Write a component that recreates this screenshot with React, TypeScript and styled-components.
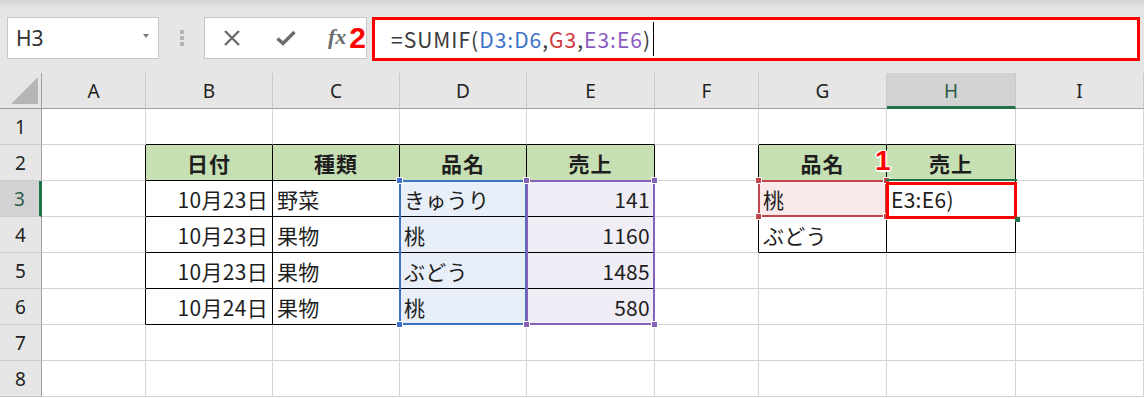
import React from 'react';
import styled, { createGlobalStyle } from 'styled-components';

const GlobalStyle = createGlobalStyle`
  html, body {
    margin: 0;
    padding: 0;
    background: #ffffff;
  }
  body {
    font-family: "Noto Sans CJK JP", "Noto Sans", sans-serif;
    color: #222;
  }
`;

const COLUMNS = ['A', 'B', 'C', 'D', 'E', 'F', 'G', 'H', 'I'];
const ROW_COUNT = 8;

const GREEN_HEAD = '#c6e0b4';
const BLUE_FILL = '#e9eff9';
const PURPLE_FILL = '#f0edf7';
const PINK_FILL = '#f9e9e9';

type Align = 'left' | 'center' | 'right';

interface CellData {
  text: string;
  align?: Align;
  bold?: boolean;
  bg?: string;
}

const head = (text: string): CellData => ({ text, align: 'center', bold: true, bg: GREEN_HEAD });

const DATA: Record<string, CellData> = {
  B2: head('日付'),
  C2: head('種類'),
  D2: head('品名'),
  E2: head('売上'),
  B3: { text: '10月23日', align: 'right' },
  B4: { text: '10月23日', align: 'right' },
  B5: { text: '10月23日', align: 'right' },
  B6: { text: '10月24日', align: 'right' },
  C3: { text: '野菜' },
  C4: { text: '果物' },
  C5: { text: '果物' },
  C6: { text: '果物' },
  D3: { text: 'きゅうり', bg: BLUE_FILL },
  D4: { text: '桃', bg: BLUE_FILL },
  D5: { text: 'ぶどう', bg: BLUE_FILL },
  D6: { text: '桃', bg: BLUE_FILL },
  E3: { text: '141', align: 'right', bg: PURPLE_FILL },
  E4: { text: '1160', align: 'right', bg: PURPLE_FILL },
  E5: { text: '1485', align: 'right', bg: PURPLE_FILL },
  E6: { text: '580', align: 'right', bg: PURPLE_FILL },
  G2: head('品名'),
  H2: head('売上'),
  G3: { text: '桃', bg: PINK_FILL },
  H3: { text: 'E3:E6)' },
  G4: { text: 'ぶどう' },
};

// bordered tables, as [firstCol, firstRow, lastCol, lastRow] (1-based sheet coords)
const TABLES: [number, number, number, number][] = [
  [2, 2, 5, 6],
  [7, 2, 8, 4],
];

const edgesFor = (col: number, row: number) => {
  let right = false;
  let bottom = false;
  TABLES.forEach(([c1, r1, c2, r2]) => {
    const inRows = row >= r1 && row <= r2;
    const inCols = col >= c1 && col <= c2;
    if (inRows && col >= c1 - 1 && col <= c2) right = true;
    if (inCols && row >= r1 - 1 && row <= r2) bottom = true;
  });
  return { right, bottom };
};

/* ---------- formula bar ---------- */

const Page = styled.div`
  width: 1144px;
  height: 398px;
  display: flex;
  flex-direction: column;
  overflow: hidden;
`;

const FormulaArea = styled.div`
  height: 73px;
  flex: none;
  display: flex;
  align-items: flex-start;
  padding: 17px 4px 0 7px;
  box-sizing: border-box;
  background: linear-gradient(#d5d5d5 0, #e2e2e2 7px, #e6e6e6 9px);
`;

const NameBox = styled.div`
  width: 152px;
  height: 42px;
  box-sizing: border-box;
  border: 1px solid #c6c6c6;
  background: #fff;
  display: flex;
  align-items: center;
  justify-content: space-between;
  padding: 0 9px 0 8px;
  font-family: "Noto Sans", sans-serif;
  font-size: 21px;
  color: #333;
`;

const DropArrow = styled.span`
  width: 0;
  height: 0;
  border-left: 3.5px solid transparent;
  border-right: 3.5px solid transparent;
  border-top: 4px solid #7a7a7a;
  margin-bottom: 4px;
`;

const Grip = styled.div`
  width: 45px;
  height: 42px;
  display: flex;
  flex-direction: column;
  align-items: center;
  justify-content: center;
  gap: 2px;
`;

const GripDot = styled.span`
  width: 4px;
  height: 4px;
  background: #b4b4b4;
`;

const FxButtons = styled.div`
  position: relative;
  width: 163px;
  height: 42px;
  box-sizing: border-box;
  border: 1px solid #c6c6c6;
  background: #fff;
  display: flex;
  align-items: center;
  gap: 35px;
  padding-left: 18px;
`;

const FxLabel = styled.span`
  font-family: "Liberation Serif", serif;
  font-style: italic;
  font-weight: bold;
  font-size: 22px;
  color: #6b6b6b;
  margin-left: -3px;
  margin-top: -2px;
`;

const Callout = styled.span<{ $size: number }>`
  position: absolute;
  font-family: "Liberation Sans", Arial, sans-serif;
  font-weight: bold;
  font-size: ${p => p.$size}px;
  line-height: 1;
  color: #ff0000;
  text-shadow: -1px -1px 0 #fff, 1px -1px 0 #fff, -1px 1px 0 #fff, 1px 1px 0 #fff,
    0 -1.5px 0 #fff, 0 1.5px 0 #fff, -1.5px 0 0 #fff, 1.5px 0 0 #fff;
  z-index: 5;
`;

const StepTwo = styled(Callout)`
  right: 0px;
  top: 5px;
`;

const FormulaInput = styled.div`
  margin-left: 5px;
  flex: 1;
  height: 44px;
  box-sizing: border-box;
  border: 3px solid #ff0000;
  background: #fff;
  display: flex;
  align-items: center;
  padding-left: 16px;
  font-family: "Noto Sans CJK JP", sans-serif;
  font-size: 21px;
  letter-spacing: 1px;
  color: #3a3a3a;
  white-space: nowrap;
`;

const Ref = styled.span<{ $color: string }>`
  color: ${p => p.$color};
`;

const Caret = styled.span`
  display: inline-block;
  width: 0;
  height: 34px;
  border-left: 1px solid #000;
  margin-left: 2px;
`;

/* ---------- sheet ---------- */

const Sheet = styled.div`
  flex: 1;
  display: grid;
  grid-template-columns: 42px 104px 127px 127px 127px 128px 104px 128px 129px 1fr;
  grid-template-rows: repeat(9, 36px);
  background: #fff;
`;

const Corner = styled.div`
  grid-row: 1;
  grid-column: 1;
  background: #e6e6e6;
  border-right: 1px solid #9e9e9e;
  border-bottom: 1px solid #9e9e9e;
  display: flex;
  align-items: flex-end;
  justify-content: flex-end;
  padding: 0 3px 4px 0;
`;

const ColHead = styled.div<{ $col: number; $active?: boolean }>`
  grid-row: 1;
  grid-column: ${p => p.$col};
  background: ${p => (p.$active ? '#d2d2d2' : '#e6e6e6')};
  border-right: 1px solid #cacaca;
  border-bottom: ${p => (p.$active ? '3px solid #217346' : '1px solid #9e9e9e')};
  display: flex;
  align-items: center;
  justify-content: center;
  font-family: "Noto Sans", sans-serif;
  font-size: 19px;
  color: ${p => (p.$active ? '#2b5d47' : '#222')};
  padding-top: ${p => (p.$active ? '2px' : '0')};
`;

const RowHead = styled.div<{ $row: number; $active?: boolean }>`
  grid-row: ${p => p.$row};
  grid-column: 1;
  background: ${p => (p.$active ? '#d2d2d2' : '#e6e6e6')};
  border-right: ${p => (p.$active ? '3px solid #217346' : '1px solid #9e9e9e')};
  border-bottom: 1px solid #cacaca;
  display: flex;
  align-items: center;
  justify-content: center;
  font-family: "Noto Sans", sans-serif;
  font-size: 19px;
  color: ${p => (p.$active ? '#2b5d47' : '#222')};
`;

const Cell = styled.div<{
  $row: number;
  $col: number;
  $align: Align;
  $bold?: boolean;
  $bg?: string;
  $edgeR?: boolean;
  $edgeB?: boolean;
}>`
  grid-row: ${p => p.$row};
  grid-column: ${p => p.$col};
  position: relative;
  display: flex;
  align-items: center;
  justify-content: ${p =>
    p.$align === 'right' ? 'flex-end' : p.$align === 'center' ? 'center' : 'flex-start'};
  padding: 1px 4px 0 4px;
  min-width: 0;
  background: ${p => p.$bg ?? '#fff'};
  border-right: 1px solid ${p => (p.$edgeR ? '#000' : '#d4d4d4')};
  border-bottom: 1px solid ${p => (p.$edgeB ? '#000' : '#d4d4d4')};
  font-size: 21px;
  letter-spacing: ${p => (p.$bold ? '1px' : '0.3px')};
  font-weight: ${p => (p.$bold ? 700 : 400)};
  color: #1e1e1e;
  white-space: nowrap;
`;

const StepOne = styled(Callout)`
  left: -12px;
  top: 2px;
`;

const RangeFrame = styled.div<{ $row: number; $col: number; $rows: number; $color: string }>`
  grid-row: ${p => p.$row} / span ${p => p.$rows};
  grid-column: ${p => p.$col};
  position: relative;
  margin: -1px 0 0 -1px;
  border: 2px solid ${p => p.$color};
  pointer-events: none;
  z-index: 2;
`;

const Handle = styled.span<{ $color: string; $x: 'l' | 'r'; $y: 't' | 'b' }>`
  position: absolute;
  width: 5px;
  height: 5px;
  background: ${p => p.$color};
  outline: 1px solid #fff;
  ${p => (p.$x === 'l' ? 'left: -4px;' : 'right: -4px;')}
  ${p => (p.$y === 't' ? 'top: -4px;' : 'bottom: -4px;')}
`;

const ActiveFrame = styled.div`
  grid-row: 4;
  grid-column: 9;
  position: relative;
  margin: -2px -1px -2px -1px;
  border-top: 2px solid #217346;
  pointer-events: none;
  z-index: 3;
`;

const RedBox = styled.div`
  position: absolute;
  inset: 1px 0 0 0;
  border: 3px solid #ff0000;
`;

const FillHandle = styled.span`
  position: absolute;
  right: -3px;
  bottom: -3px;
  width: 5px;
  height: 5px;
  background: #217346;
`;

const Range: React.FC<{ row: number; col: number; rows: number; color: string }> = ({
  row,
  col,
  rows,
  color,
}) => (
  <RangeFrame $row={row} $col={col} $rows={rows} $color={color}>
    <Handle $color={color} $x="l" $y="t" />
    <Handle $color={color} $x="r" $y="t" />
    <Handle $color={color} $x="l" $y="b" />
    <Handle $color={color} $x="r" $y="b" />
  </RangeFrame>
);

const CrossIcon = () => (
  <svg width="18" height="16" viewBox="0 0 18 16">
    <path d="M2 1 L16 15 M16 1 L2 15" stroke="#6b6b6b" strokeWidth="2.4" fill="none" />
  </svg>
);

const CheckIcon = () => (
  <svg width="20" height="16" viewBox="0 0 20 16">
    <path d="M1.5 8.5 L7 13.5 L18.5 2" stroke="#6b6b6b" strokeWidth="3.4" fill="none" />
  </svg>
);

const CornerTriangle = () => (
  <svg width="27" height="27" viewBox="0 0 27 27">
    <polygon points="27,0 27,27 0,27" fill="#b5b5b5" />
  </svg>
);

export default function App() {
  const cells: React.ReactNode[] = [];
  for (let r = 1; r <= ROW_COUNT; r++) {
    COLUMNS.forEach((letter, i) => {
      const col = i + 1;
      const key = `${letter}${r}`;
      const data = DATA[key];
      const edges = edgesFor(col, r);
      cells.push(
        <Cell
          key={key}
          $row={r + 1}
          $col={col + 1}
          $align={data?.align ?? 'left'}
          $bold={data?.bold}
          $bg={data?.bg}
          $edgeR={edges.right}
          $edgeB={edges.bottom}
        >
          {data?.text}
          {key === 'H2' && <StepOne $size={28}>1</StepOne>}
        </Cell>,
      );
    });
  }

  return (
    <>
      <GlobalStyle />
      <Page>
        <FormulaArea>
          <NameBox>
            H3
            <DropArrow />
          </NameBox>
          <Grip>
            <GripDot />
            <GripDot />
            <GripDot />
          </Grip>
          <FxButtons>
            <CrossIcon />
            <CheckIcon />
            <FxLabel>fx</FxLabel>
            <StepTwo $size={30}>2</StepTwo>
          </FxButtons>
          <FormulaInput>
            =SUMIF(<Ref $color="#3b73c9">D3:D6</Ref>,<Ref $color="#d2373c">G3</Ref>,
            <Ref $color="#8a5cc2">E3:E6</Ref>)
            <Caret />
          </FormulaInput>
        </FormulaArea>

        <Sheet>
          <Corner>
            <CornerTriangle />
          </Corner>
          {COLUMNS.map((letter, i) => (
            <ColHead key={letter} $col={i + 2} $active={letter === 'H'}>
              {letter}
            </ColHead>
          ))}
          {Array.from({ length: ROW_COUNT }, (_, i) => (
            <RowHead key={i} $row={i + 2} $active={i + 1 === 3}>
              {i + 1}
            </RowHead>
          ))}
          {cells}
          <Range row={4} col={5} rows={4} color="#3f71c4" />
          <Range row={4} col={6} rows={4} color="#8462b8" />
          <Range row={4} col={8} rows={1} color="#c0474a" />
          <ActiveFrame>
            <RedBox />
            <FillHandle />
          </ActiveFrame>
        </Sheet>
      </Page>
    </>
  );
}
